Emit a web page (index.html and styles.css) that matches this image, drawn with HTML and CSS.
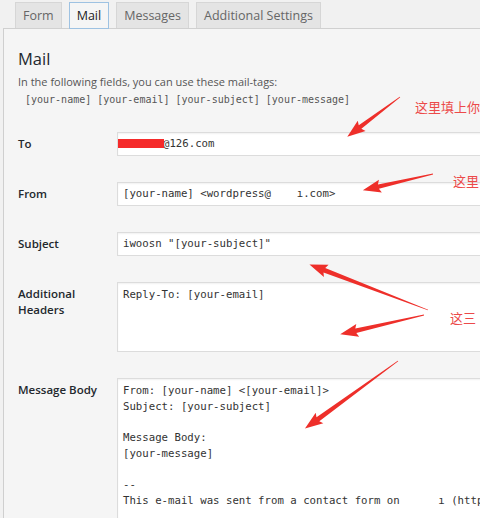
FILE: index.html
```html
<!DOCTYPE html>
<html lang="en">
<head>
<meta charset="utf-8">
<title>Mail settings</title>
<link rel="stylesheet" href="styles.css">
</head>
<body>
<div class="editor">
  <ul class="tabs">
    <li class="tab">Form</li>
    <li class="tab active">Mail</li>
    <li class="tab">Messages</li>
    <li class="tab">Additional Settings</li>
  </ul>
  <div class="panel">
    <h2 class="title">Mail</h2>
    <p class="desc">In the following fields, you can use these mail-tags:</p>
    <p class="tags">[your-name] [your-email] [your-subject] [your-message]</p>

    <div class="row">
      <label class="label">To</label>
      <div class="field"><span class="redact"></span><span class="to-text">@126.com</span></div>
    </div>
    <div class="row">
      <label class="label">From</label>
      <div class="field">[your-name] &lt;wordpress@    ı.com&gt;</div>
    </div>
    <div class="row">
      <label class="label">Subject</label>
      <div class="field">iwoosn "[your-subject]"</div>
    </div>
    <div class="row">
      <label class="label">Additional<br>Headers</label>
      <div class="field area headers">Reply-To: [your-email]</div>
    </div>
    <div class="row">
      <label class="label">Message Body</label>
      <div class="field area body">From: [your-name] &lt;[your-email]&gt;
Subject: [your-subject]

Message Body:
[your-message]

--
This e-mail was sent from a contact form on      ı (http</div>
    </div>
  </div>
</div>

<div class="notes">
  <svg class="arrows" width="480" height="518" viewBox="0 0 480 518">
    <g fill="#ee2f2a">
      <polygon transform="translate(400 97) rotate(143)" points="0,-0.4 50,-2.2 48,-6.5 66,0 48,6.5 50,2.2 0,0.4"/>
      <polygon transform="translate(433 174) rotate(167)" points="0,-0.4 56,-2.2 54,-6.5 72,0 54,6.5 56,2.2 0,0.4"/>
      <polygon transform="translate(428 310) rotate(201)" points="0,-0.4 111,-2.4 109,-6.5 127,0 109,6.5 111,2.4 0,0.4"/>
      <polygon transform="translate(424 315) rotate(167)" points="0,-0.4 70,-2.2 68,-6.5 86,0 68,6.5 70,2.2 0,0.4"/>
      <polygon transform="translate(398 361) rotate(144)" points="0,-0.4 99,-2.4 97,-6.5 115,0 97,6.5 99,2.4 0,0.4"/>
    </g>
  </svg>
  <div class="note n1">这里填上你</div>
  <div class="note n2">这里</div>
  <div class="note n3">这三</div>
</div>
</body>
</html>
```
FILE: styles.css
```css
html, body {
  margin: 0;
  padding: 0;
}

body {
  width: 480px;
  height: 518px;
  overflow: hidden;
  background: #f1f1f1;
  font-family: "Open Sans", "Liberation Sans", sans-serif;
  color: #444;
  position: relative;
}

.editor {
  margin: 2px 0 0 3px;
}

/* tab strip */
.tabs {
  list-style: none;
  margin: 0;
  padding: 0 0 0 12px;
  display: flex;
  gap: 7px;
  height: 26px;
}

.tab {
  box-sizing: border-box;
  height: 26px;
  padding: 0 7px;
  border: 1px solid #d6d6d6;
  border-bottom: none;
  background: #e4e4e4;
  color: #666;
  font-size: 12.5px;
  line-height: 25px;
}

.tab.active {
  background: #f5f5f5;
  color: #222;
  border: 1px solid #9ec2e2;
  height: 27px;
  position: relative;
  z-index: 1;
}

/* settings panel */
.panel {
  border-top: 1px solid #d0d0d0;
  border-left: 1px solid #cfcfcf;
  background: #f5f5f5;
  padding: 19px 0 0 14px;
  height: 470px;
}

.title {
  margin: 0 0 4px;
  font-size: 16.5px;
  font-weight: 400;
  line-height: 22px;
  color: #23282d;
}

.desc {
  margin: 0;
  font-size: 11px;
  line-height: 16px;
  color: #555;
}

.tags {
  margin: 2px 0 0 7px;
  font-family: "DejaVu Sans Mono", "Liberation Mono", monospace;
  font-size: 10px;
  line-height: 16px;
  color: #555;
}

.row {
  display: flex;
  margin-top: 26px;
}

.row:first-of-type {
  margin-top: 24px;
}

.label {
  width: 99px;
  flex: none;
  font-size: 11.5px;
  font-weight: 600;
  line-height: 16px;
  padding-top: 4px;
  color: #23282d;
}

.field {
  box-sizing: border-box;
  position: relative;
  width: 380px;
  height: 24px;
  flex: none;
  background: #fff;
  border: 1px solid #dcdcdc;
  border-right: none;
  box-shadow: inset 0 1px 2px rgba(0, 0, 0, 0.06);
  padding: 3px 5px;
  font-family: "DejaVu Sans Mono", "Liberation Mono", monospace;
  font-size: 10.7px;
  line-height: 16px;
  color: #333;
  white-space: pre;
  overflow: hidden;
}

.field.area {
  padding-top: 4px;
  line-height: 15.7px;
}

.field.headers {
  height: 70px;
}

.field.body {
  height: 140px;
  border-bottom: none;
}

.redact {
  position: absolute;
  left: -1px;
  top: 6px;
  width: 47px;
  height: 9px;
  background: #f52a2a;
}

.to-text {
  padding-left: 40px;
}

/* red annotations drawn over the form */
.notes {
  position: absolute;
  left: 0;
  top: 0;
  width: 480px;
  height: 518px;
  pointer-events: none;
}

.arrows {
  position: absolute;
  left: 0;
  top: 0;
}

.note {
  position: absolute;
  font-family: "Noto Sans CJK SC", sans-serif;
  font-size: 13px;
  line-height: 16px;
  color: #ec4a4a;
  white-space: nowrap;
}

.n1 { left: 415px; top: 99px; }
.n2 { left: 453px; top: 173px; }
.n3 { left: 450px; top: 310px; }
```
